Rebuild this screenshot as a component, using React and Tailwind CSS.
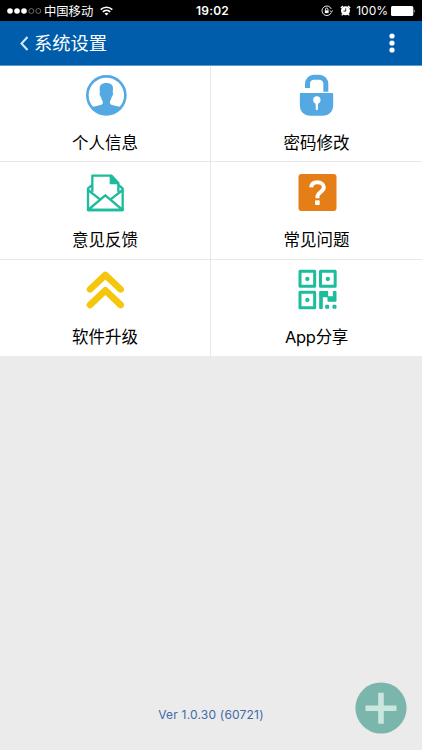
function PersonIcon() {
  return (
    <svg className="block h-11 w-11" viewBox="69 24 132 132">
      <circle cx="139" cy="88" r="57" fill="#fff" stroke="#55a9e3" strokeWidth="8" />
      <path
        d="M139 51c-14 0-21 7-20 19l1 10c-2 0-2 2-1 5 1 5 2 7 4 8 1 6 3 9 5 12v8c-6 6-21 6-35 11A58 58 0 0 0 185 124c-14-5-29-5-35-11v-8c2-3 4-6 5-12 2-1 3-3 4-8 1-3 1-5-1-5l1-10c1-12-6-19-20-19z"
        fill="#55a9e3"
      />
    </svg>
  );
}

function LockIcon() {
  return (
    <svg className="block h-11 w-11" viewBox="73.5 24 132 132">
      <path d="M111 66V55c0-13 8-21 19-21h16c12 0 20 8 20 21v22" fill="none" stroke="#55a9e3" strokeWidth="15" />
      <path d="M90 81h95q3 0 3 3v33c0 20-12 32-32 32h-36c-20 0-32-12-32-32V84q0-3 2-3z" fill="#55a9e3" />
      <circle cx="139" cy="102" r="11" fill="#fff" />
      <path d="M139 102v27" stroke="#fff" strokeWidth="7" strokeLinecap="round" />
    </svg>
  );
}

function MailIcon() {
  return (
    <svg className="block h-11 w-11" viewBox="69 27 132 132">
      <path d="M97 69L84 79v65h104V79l-13-10" fill="none" stroke="#1dbc9c" strokeWidth="7" strokeLinejoin="round" />
      <path
        d="M97 89V41h57l21 22v26M84 84l37 29M188 84l-37 29M84 144l52-44 52 44z"
        fill="none"
        stroke="#1dbc9c"
        strokeWidth="7"
        strokeLinejoin="round"
      />
      <path d="M149 41h7l20 20v6h-27z" fill="#1dbc9c" />
    </svg>
  );
}

function QuestionIcon() {
  return (
    <svg className="block h-11 w-11" viewBox="73.5 27 132 132">
      <rect x="84" y="36" width="114" height="111" rx="9" fill="#e67e17" />
      <path d="M122 76c1-10 8-15 18-15s20 5 20 15c0 14-19 14-19 27v6" fill="none" stroke="#fff" strokeWidth="12" />
      <rect x="133.5" y="115" width="14" height="14" rx="3" fill="#fff" />
    </svg>
  );
}

function UpgradeIcon() {
  return (
    <svg className="block h-11 w-11" viewBox="69 24 132 132">
      <path
        d="M90 88l46-43 46 43M90 135l46-44 46 44"
        fill="none"
        stroke="#f4c60d"
        strokeWidth="20"
        strokeLinecap="round"
        strokeLinejoin="round"
      />
    </svg>
  );
}

function QrIcon() {
  return (
    <svg className="block h-11 w-11" viewBox="73.5 24 132 132">
      <g fill="none" stroke="#1dbc9c" strokeWidth="9" strokeLinejoin="round">
        <rect x="88.5" y="34" width="44" height="45" />
        <rect x="150" y="34" width="44" height="45" />
        <rect x="88.5" y="97" width="44" height="46" />
      </g>
      <g fill="#1dbc9c">
        <circle cx="110.5" cy="57" r="6.5" />
        <circle cx="172" cy="57" r="6.5" />
        <circle cx="110.5" cy="120" r="6.5" />
        <path d="M149 93h21q3 0 3 3v13h14V96q0-3 3-3h5q3 0 3 3v26q0 3-3 3h-21q-3 0-3-3v-10h-14v32q0 3-3 3h-5q-3 0-3-3V96q0-3 3-3z" />
        <rect x="164" y="134" width="12" height="12" rx="3" />
        <rect x="186" y="134" width="12" height="12" rx="3" />
      </g>
    </svg>
  );
}

function Cell({ icon, label, className, labelClassName = "" }) {
  return (
    <button className={`flex flex-col items-center border-[#e8e8e8] ${className}`}>
      {icon}
      <span className={`mt-[13px] text-[16.5px] leading-6 text-black ${labelClassName}`}>{label}</span>
    </button>
  );
}

function StatusBar() {
  return (
    <div className="flex h-[21px] items-center bg-black text-white">
      <div className="flex flex-1 items-center pl-[7px]">
        <svg className="block h-2 w-[35px]" viewBox="0 0 35 8">
          <circle cx="3" cy="4" r="2.8" fill="#fff" />
          <circle cx="10" cy="4" r="2.8" fill="#fff" />
          <circle cx="17" cy="4" r="2.8" fill="#fff" />
          <circle cx="24.3" cy="4" r="2.5" fill="none" stroke="#aaa" strokeWidth=".6" />
          <circle cx="31.3" cy="4" r="2.5" fill="none" stroke="#aaa" strokeWidth=".6" />
        </svg>
        <span className="ml-[2px] pt-[2px] text-[12.3px] leading-[19px]">中国移动</span>
        <svg className="ml-[7px] block h-[10px] w-[13px]" viewBox="0 0 13 10" fill="none" stroke="#fff" strokeWidth="1.6">
          <path d="M.7 3.6c3.3-3.2 8.3-3.2 11.6 0M2.8 5.8c2.1-2 5.3-2 7.4 0" />
          <path d="M6.5 9.6L4.5 7.5c1.2-1 2.8-1 4 0z" fill="#fff" stroke="none" />
        </svg>
      </div>
      <span className="pl-[3px] text-[12px] font-semibold leading-[21px] tracking-[0.2px]">19:02</span>
      <div className="flex flex-1 items-center justify-end pr-[7px]">
        <svg className="block h-3 w-3" viewBox="0 0 12 12" fill="none" stroke="#fff" strokeWidth=".9">
          <path d="M10.3 7.5A4.8 4.8 0 1 1 10.3 4M8.8 5.4l1.7 1.6 1.3-1.6" />
          <path d="M4.5 5.5V4.2a1.2 1.2 0 0 1 2.4 0v1.3" />
          <rect x="3.8" y="5.3" width="3.8" height="2.8" fill="#fff" stroke="none" />
        </svg>
        <svg className="ml-[7px] block h-[11px] w-[11px]" viewBox="0 0 11 11">
          <circle cx="5.5" cy="5.8" r="4.5" fill="#fff" />
          <path d="M.8 3L3 1M10.2 3L8 1M2.7 9.2L1.8 10.4M8.3 9.2l.9 1.2" stroke="#fff" strokeWidth="1.3" />
          <path d="M5.7 3.3v2.8H3.5" fill="none" stroke="#000" strokeWidth=".8" />
        </svg>
        <span className="ml-[5.5px] text-[12px] leading-[21px]">100%</span>
        <svg className="ml-[3px] block h-[10px] w-6" viewBox="0 0 24 10">
          <rect x="0" y="0" width="22.3" height="10" rx="1.5" fill="#fff" />
          <path d="M22.9 3.2q1.5 1.8 0 3.6z" fill="#fff" />
        </svg>
      </div>
    </div>
  );
}

export default function App() {
  return (
    <div className="relative flex h-[750px] w-[422px] flex-col overflow-hidden bg-[#ebebeb] font-['Inter','Noto_Sans_CJK_SC',sans-serif]">
      <StatusBar />
      <header className="flex h-[45px] items-center justify-between border-b border-[#5c9bd0] bg-[#005dac] pl-5 pr-[27px] text-white">
        <div className="flex items-center">
          <svg className="block h-[15px] w-[9px]" viewBox="0 0 9 15" fill="none" stroke="#d5e8f8" strokeWidth="2">
            <path d="M7.5 1L1.5 7.5l6 6.5" />
          </svg>
          <h1 className="ml-[5px] text-[18.3px] leading-6">系统设置</h1>
        </div>
        <svg className="block h-5 w-[6px]" viewBox="0 0 6 20" fill="#fff">
          <circle cx="3" cy="3" r="2.6" />
          <circle cx="3" cy="10" r="2.6" />
          <circle cx="3" cy="17" r="2.6" />
        </svg>
      </header>
      <main className="grid grid-cols-2 grid-rows-[96px_98px_96px] bg-white">
        <Cell className="border-b border-r pt-2" icon={<PersonIcon />} label="个人信息" />
        <Cell className="border-b pt-2" icon={<LockIcon />} label="密码修改" />
        <Cell className="border-b border-r pt-[9px]" icon={<MailIcon />} label="意见反馈" />
        <Cell className="border-b pt-[9px]" icon={<QuestionIcon />} label="常见问题" />
        <Cell className="border-r pt-2" icon={<UpgradeIcon />} label="软件升级" />
        <Cell className="pt-2" icon={<QrIcon />} label="App分享" labelClassName="tracking-[-0.3px]" />
      </main>
      <footer className="mt-auto pb-[26px] text-center text-[12px] leading-[18px] tracking-[0.2px] text-[#3f69a8]">
        Ver 1.0.30 (60721)
      </footer>
      <button className="absolute bottom-4 right-[15px] h-[52px] w-[52px]">
        <svg className="block h-full w-full" viewBox="0 0 52 52">
          <circle cx="26" cy="26" r="25.6" fill="#7ab6ac" />
          <path d="M26 10.8v31M10.5 26.3h31" stroke="#c9e6df" strokeWidth="5.6" />
        </svg>
      </button>
    </div>
  );
}
